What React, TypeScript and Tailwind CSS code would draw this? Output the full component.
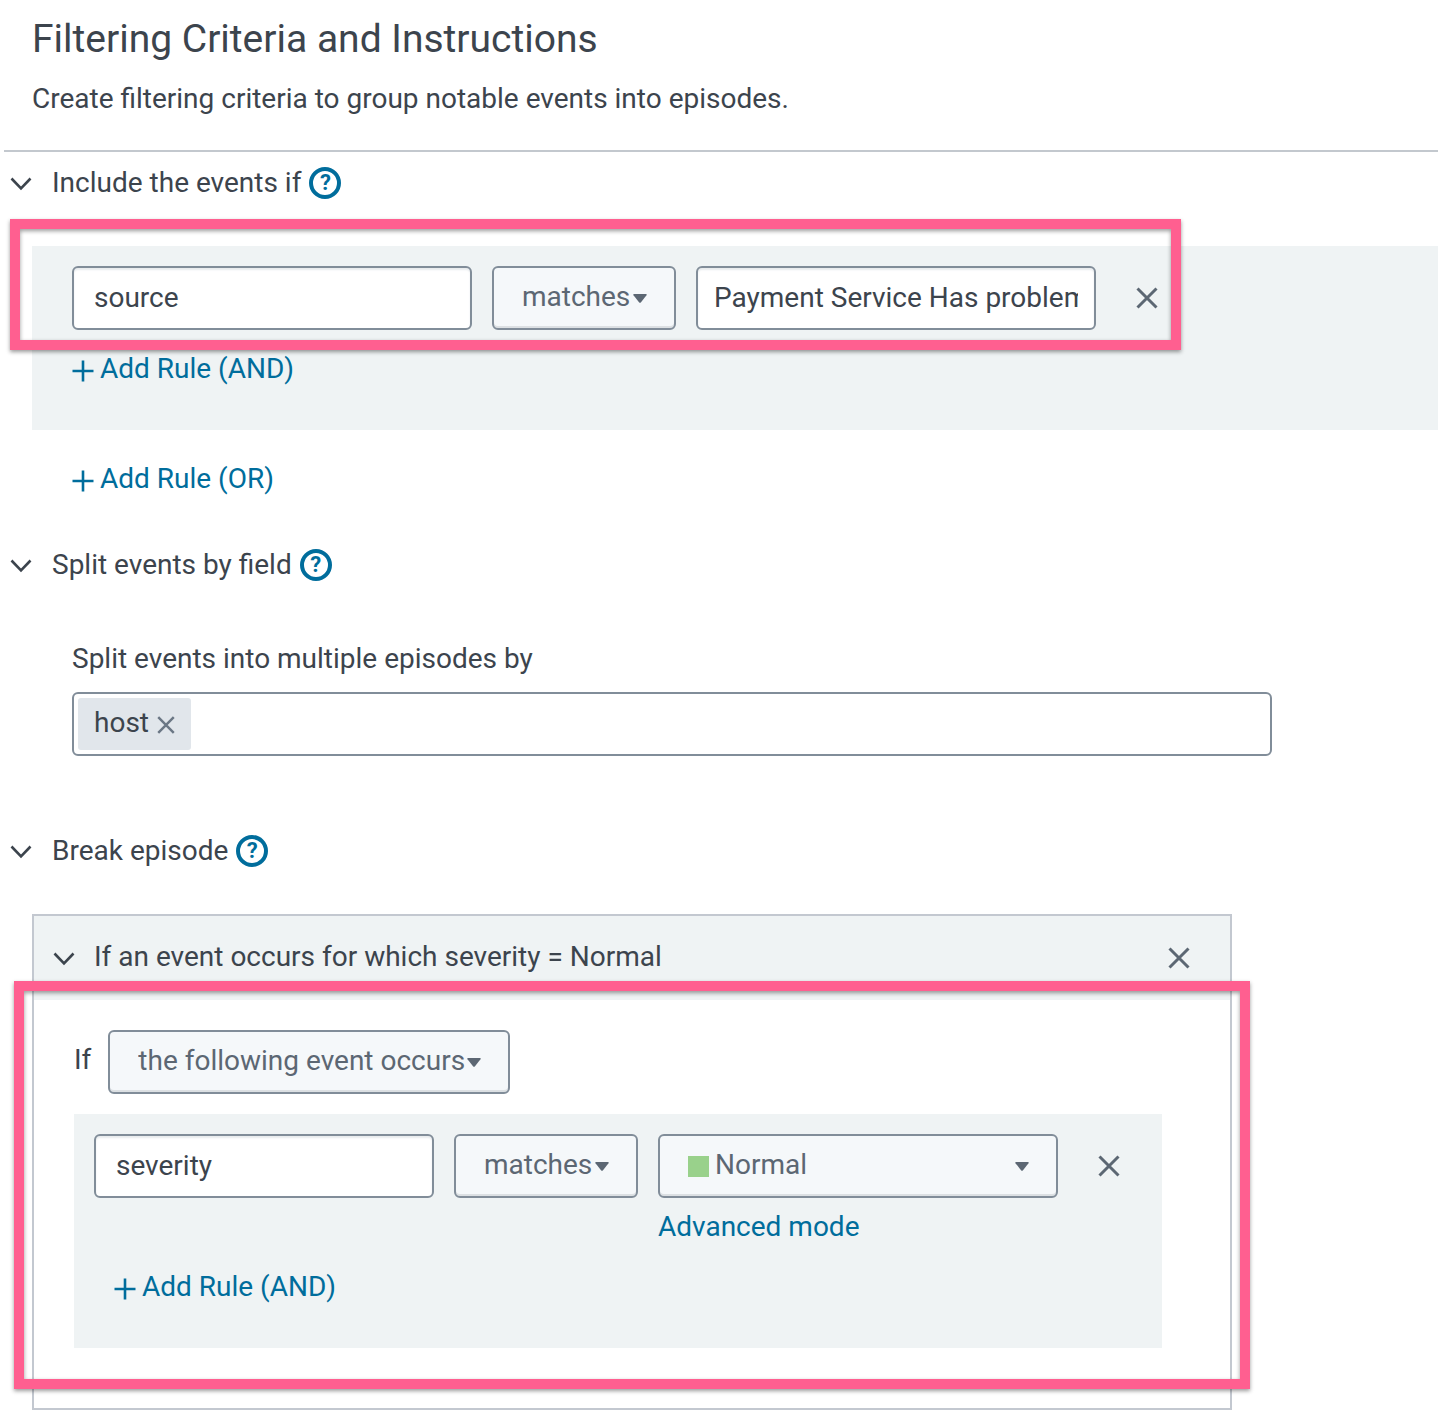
import { useId, type ReactNode } from "react";

function Chevron() {
  return (
    <svg viewBox="0 0 22 22" className="size-[22px] shrink-0" fill="none" stroke="#3c444d" strokeWidth="2.6" aria-hidden="true">
      <path d="M1.5 6.5 11 16.3 20.5 6.5" />
    </svg>
  );
}

function Cross({ className }: { className: string }) {
  return (
    <svg viewBox="0 0 22 22" className={className} fill="none" stroke="currentColor" strokeWidth="3" aria-hidden="true">
      <path d="M1.5 1.5 20.5 20.5M20.5 1.5 1.5 20.5" />
    </svg>
  );
}

function Caret() {
  return (
    <svg viewBox="0 0 14 9" className="pointer-events-none absolute top-[28px] right-[29px] h-[9px] w-[14px]" fill="#5c6773" aria-hidden="true">
      <path d="M1 0H13Q14.3 0 13.5 1.2L8 8.2Q7 9.4 6 8.2L.5 1.2Q-.3 0 1 0Z" />
    </svg>
  );
}

function SectionHeader({ children }: { children: string }) {
  return (
    <div className="flex items-center pl-[10px]">
      <button type="button" aria-expanded="true" className="flex items-center gap-5">
        <Chevron />
        <h2>{children}</h2>
      </button>
      <button
        type="button"
        aria-label={"Help: " + children}
        className="ml-2 flex size-8 items-center justify-center rounded-full border-4 border-[#006d9c] text-[22px] leading-6 font-bold text-[#006d9c]"
      >
        ?
      </button>
    </div>
  );
}

function TextField({ label, value, className }: { label: string; value: string; className: string }) {
  return (
    <input
      aria-label={label}
      defaultValue={value}
      className={
        "h-16 min-w-0 rounded-md border-2 border-[#818d99] bg-white pb-0.5 text-[#3c444d] shadow-[inset_0_2px_2px_#e8ebee] " + className
      }
    />
  );
}

function Dropdown({ label, value, className, selectClass, children }: {
  label: string;
  value: string;
  className: string;
  selectClass: string;
  children?: ReactNode;
}) {
  return (
    <div className={"relative min-w-0 " + className}>
      <select
        aria-label={label}
        defaultValue={value}
        className={
          "block h-16 w-full appearance-none rounded-md border-2 border-[#818d99] bg-[#f5f8fa] pb-0.5 text-[#5c6773] shadow-[inset_0_-2px_0_#dce0e3] " + selectClass
        }
      >
        <option>{value}</option>
      </select>
      {children}
      <Caret />
    </div>
  );
}

function AddRule({ kind }: { kind: string }) {
  return (
    <button type="button" className="flex items-center gap-[6px] text-[#006d9c]">
      <svg viewBox="0 0 22 22" className="mt-1 size-[22px]" stroke="currentColor" strokeWidth="2.6" aria-hidden="true">
        <path d="M11 .5V21.5M.5 11H21.5" />
      </svg>
      <span>Add Rule ({kind})</span>
    </button>
  );
}

function RemoveButton({ label }: { label: string }) {
  return (
    <button type="button" aria-label={label} className="block shrink-0 text-[#5c6773]">
      <Cross className="size-[22px]" />
    </button>
  );
}

/* Callout frame laid over the form */
function Highlight({ className }: { className: string }) {
  return (
    <div
      className={
        "pointer-events-none absolute border-10 border-[#ff5f90] shadow-[0_2px_4px_rgba(0,0,0,0.4),inset_0_2px_4px_rgba(0,0,0,0.4)] " + className
      }
    />
  );
}

export default function App() {
  const splitId = useId();
  return (
    <main className="min-h-screen overflow-x-clip bg-white pb-4 font-['Roboto',sans-serif] text-[28px] leading-10 text-[#3c444d]">
      <header className="px-8 pt-[14px]">
        <h1 className="text-[39px] leading-[50px]">Filtering Criteria and Instructions</h1>
        <p className="mt-[15px]">Create filtering criteria to group notable events into episodes.</p>
      </header>
      <hr className="mt-[31px] ml-1 border-t-2 border-[#c3c8ce]" />

      <section className="mt-[11px]">
        <SectionHeader>Include the events if</SectionHeader>
        <div className="mt-[43px] ml-8 bg-[#eff3f4] px-10 pt-5 pb-[41px]">
          <div className="relative flex max-w-[1088px] items-center gap-5">
            <TextField label="Field" value="source" className="w-[400px] px-5" />
            <Dropdown label="Operator" value="matches" className="w-[184px]" selectClass="pl-7" />
            <TextField label="Value" value="Payment Service Has problems" className="w-[400px] px-4" />
            <div className="ml-5">
              <RemoveButton label="Remove rule" />
            </div>
            <Highlight className="-top-[47px] -right-[21px] -bottom-[20px] -left-[62px]" />
          </div>
          <div className="mt-[19px]">
            <AddRule kind="AND" />
          </div>
        </div>
        <div className="mt-[29px] ml-[72px]">
          <AddRule kind="OR" />
        </div>
      </section>

      <section className="mt-[46px]">
        <SectionHeader>Split events by field</SectionHeader>
        <div className="mt-[54px] mr-8 ml-[72px] max-w-[1200px]">
          <label htmlFor={splitId}>Split events into multiple episodes by</label>
          <div className="mt-[13px] flex h-16 items-center rounded-md border-2 border-[#818d99] p-1">
            <span className="flex h-[52px] items-center gap-2 rounded-[3px] bg-[#e1e6eb] px-4">
              <span className="-mt-0.5">host</span>
              <button type="button" aria-label="Remove host" className="mt-0.5 text-[#6b7785]">
                <Cross className="size-[18px]" />
              </button>
            </span>
            <input id={splitId} className="h-full min-w-0 flex-1 px-2 outline-none" />
          </div>
        </div>
      </section>

      <section className="mt-[75px]">
        <SectionHeader>Break episode</SectionHeader>
        <div className="mt-[43px] mr-8 ml-8 max-w-[1200px] border-2 border-[#c3c8d0]">
          <div className="flex h-[84px] items-center justify-between bg-[#eff3f4] pr-10 pl-[19px]">
            <button type="button" aria-expanded="true" className="flex items-center gap-[19px]">
              <Chevron />
              <span className="-mt-0.5">If an event occurs for which severity = Normal</span>
            </button>
            <RemoveButton label="Remove break condition" />
          </div>
          <div className="relative px-10 pt-[30px] pb-[60px]">
            <div className="flex items-center gap-[17px]">
              <span className="-mt-1">If</span>
              <Dropdown label="Break condition" value="the following event occurs" className="w-[402px]" selectClass="pl-7" />
            </div>
            <div className="mt-5 mr-7 bg-[#eff3f4] px-5 pt-5 pb-[41px]">
              <div className="flex max-w-[1026px] items-center gap-5">
                <TextField label="Break field" value="severity" className="w-[340px] px-5" />
                <Dropdown label="Break operator" value="matches" className="w-[184px]" selectClass="pl-7" />
                <Dropdown label="Severity" value="Normal" className="w-[400px]" selectClass="pl-[55px]">
                  <span className="pointer-events-none absolute top-[22px] left-[30px] size-[21px] bg-[#99d18b]" />
                </Dropdown>
                <div className="ml-5">
                  <RemoveButton label="Remove break rule" />
                </div>
              </div>
              <div className="mt-[9px] grid max-w-[964px] grid-cols-[564fr_400fr]">
                <a href="#advanced" className="col-start-2 w-fit text-[#006d9c]">Advanced mode</a>
              </div>
              <div className="mt-5 ml-5">
                <AddRule kind="AND" />
              </div>
            </div>
            <Highlight className="-top-[19px] -right-[20px] bottom-[19px] -left-[20px]" />
          </div>
        </div>
      </section>
    </main>
  );
}
